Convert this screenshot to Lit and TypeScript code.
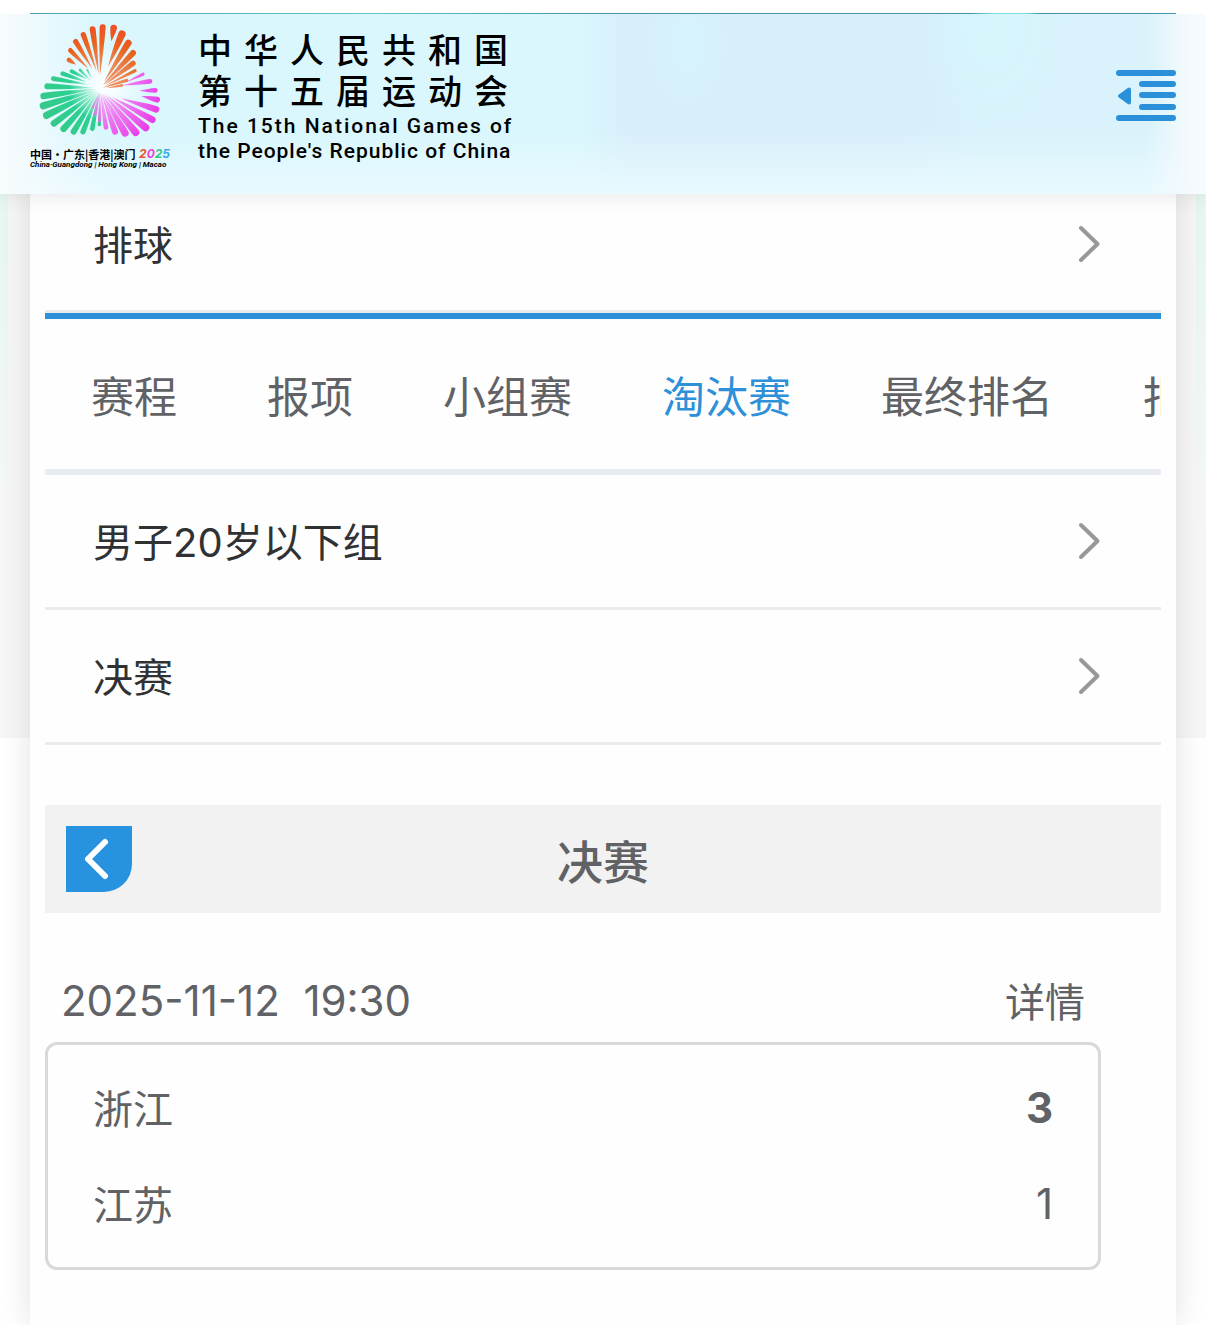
import { LitElement, html, svg, css } from "lit";
import { customElement, property, state } from "lit/decorators.js";

type Petal = [x1: number, y1: number, x2: number, y2: number, r: number];

/* Each petal tapers from (x1, y1) to a rounded tip centred on (x2, y2). */
const ORANGE: Petal[] = [
  [228, 190, 207, 176, 7],
  [266, 203, 211, 147, 7],
  [277, 202, 227, 121, 8],
  [290, 210, 250, 100, 8],
  [296, 218, 278, 84, 9],
  [300, 222, 308, 78, 9],
  [334, 120, 341, 80, 10],
  [324, 196, 366, 98, 11],
  [312, 242, 385, 125, 10],
  [308, 252, 399, 155, 9],
  [312, 251, 399, 186, 8],
  [314, 254, 405, 208, 5],
  [308, 259, 380, 237, 5],
  [320, 260, 366, 252, 4],
];
const GREEN: Petal[] = [
  [272, 238, 240, 206, 4],
  [276, 234, 262, 206, 3],
  [262, 234, 215, 210, 6],
  [262, 243, 188, 217, 7],
  [266, 250, 160, 232, 7],
  [280, 260, 142, 255, 9],
  [288, 263, 131, 284, 10],
  [290, 265, 130, 313, 11],
  [292, 267, 140, 342, 11],
  [293, 268, 162, 366, 10],
  [294, 269, 191, 382, 10],
  [295, 270, 221, 391, 9],
  [296, 271, 249, 391, 8],
  [297, 272, 277, 382, 7],
  [299, 310, 298, 370, 5],
];
const MAGENTA: Petal[] = [
  [378, 243, 429, 219, 5],
  [366, 252, 450, 240, 7],
  [418, 268, 466, 267, 7],
  [424, 284, 471, 295, 9],
  [362, 291, 468, 324, 10],
  [334, 286, 457, 355, 10],
  [318, 280, 437, 379, 11],
  [312, 278, 407, 393, 11],
  [308, 278, 375, 395, 11],
  [305, 276, 345, 391, 9],
  [302, 274, 318, 378, 7],
  [300, 272, 299, 358, 5],
  [299, 274, 286, 338, 5],
  [298, 276, 279, 318, 4],
];

const petalPath = ([x1, y1, x2, y2, r]: Petal) => {
  const dx = x2 - x1;
  const dy = y2 - y1;
  const length = Math.hypot(dx, dy);
  const nx = (-dy / length) * r;
  const ny = (dx / length) * r;
  const mx = x1 + dx * 0.6;
  const my = y1 + dy * 0.6;
  return `M${x1} ${y1}Q${mx + nx * 0.85} ${my + ny * 0.85} ${x2 + nx} ${y2 + ny}
    A${r} ${r} 0 0 0 ${x2 - nx} ${y2 - ny}Q${mx - nx * 0.85} ${my - ny * 0.85} ${x1} ${y1}Z`;
};

@customElement("games-logo")
class GamesLogo extends LitElement {
  static styles = css`
    :host {
      display: flex;
      align-items: flex-start;
      gap: 28px;
      color: #000;
    }
    .emblem {
      display: flex;
      flex-direction: column;
      width: 140px;
      white-space: nowrap;
    }
    .flower {
      width: 128px;
      height: 118px;
      margin-left: 6px;
    }
    .hosts {
      display: flex;
      justify-content: space-between;
      margin-top: 7px;
      font: 700 11px/14px "Noto Sans CJK SC", sans-serif;
    }
    .hosts b {
      font: italic 700 12px/14px Inter, sans-serif;
    }
    .y1 { color: #f0522b; }
    .y2 { color: #e945dd; }
    .y3 { color: #2fc98b; }
    .y4 { color: #38a8ee; }
    .cities {
      font: italic 700 8px/8px Roboto, sans-serif;
    }
    .name {
      display: flex;
      flex-direction: column;
      padding-top: 6px;
      white-space: nowrap;
    }
    .zh {
      font: 500 34px/41px "Noto Sans CJK SC", sans-serif;
      letter-spacing: 12px;
    }
    .english {
      margin-top: 4px;
      font: 500 21px/25px Roboto, sans-serif;
    }
    .en {
      display: block;
      letter-spacing: 2px;
    }
    .en.close {
      letter-spacing: 1px;
    }
  `;

  render() {
    return html`
      <div class="emblem">
        <svg class="flower" viewBox="108 62 384 354" aria-hidden="true">
          <defs>
            <radialGradient id="o" gradientUnits="userSpaceOnUse" cx="300" cy="255" r="190">
              <stop offset="0" stop-color="#e2602a" stop-opacity=".75" />
              <stop offset=".35" stop-color="#ea6a28" stop-opacity=".75" />
              <stop offset=".7" stop-color="#e9631f" />
              <stop offset="1" stop-color="#ee4d26" />
            </radialGradient>
            <radialGradient id="g" gradientUnits="userSpaceOnUse" cx="298" cy="264" r="180">
              <stop offset="0" stop-color="#7fe8c0" stop-opacity=".3" />
              <stop offset=".5" stop-color="#2bd191" />
              <stop offset="1" stop-color="#35c98a" />
            </radialGradient>
            <radialGradient id="m" gradientUnits="userSpaceOnUse" cx="300" cy="264" r="180">
              <stop offset="0" stop-color="#f08af0" stop-opacity=".5" />
              <stop offset=".5" stop-color="#f066ef" stop-opacity=".85" />
              <stop offset="1" stop-color="#e83fe6" />
            </radialGradient>
            <radialGradient id="w">
              <stop offset="0" stop-color="#fff" />
              <stop offset="1" stop-color="#fff" stop-opacity="0" />
            </radialGradient>
          </defs>
          <circle cx="320" cy="250" r="120" fill="url(#w)" />
          ${GREEN.map((p) => svg`<path d=${petalPath(p)} fill="url(#g)" />`)}
          ${MAGENTA.map((p) => svg`<path d=${petalPath(p)} fill="url(#m)" />`)}
          ${ORANGE.map((p) => svg`<path d=${petalPath(p)} fill="url(#o)" />`)}
        </svg>
        <div class="hosts"><span>中国·广东|香港|澳门</span><b><span class="y1">2</span><span class="y2">0</span><span class="y3">2</span><span class="y4">5</span></b></div>
        <div class="cities">China·Guangdong | Hong Kong | Macao</div>
      </div>
      <div class="name">
        <span class="zh">中华人民共和国</span>
        <span class="zh">第十五届运动会</span>
        <div class="english">
          <span class="en">The 15th National Games of</span>
          <span class="en close">the People's Republic of China</span>
        </div>
      </div>
    `;
  }
}

@customElement("picker-row")
class PickerRow extends LitElement {
  @property() label = "";

  static styles = css`
    :host {
      display: block;
      border-bottom: 3px solid #e9ecef;
    }
    .row {
      display: flex;
      align-items: center;
      justify-content: space-between;
      width: 100%;
      height: 132px;
      padding: 0 60px 0 48px;
      border: 0;
      background: none;
      color: #303133;
      font: 400 40px/60px Inter, "Noto Sans CJK SC", sans-serif;
      text-align: left;
      cursor: pointer;
    }
    .label {
      padding-top: 4px;
    }
    .chevron {
      width: 24px;
      height: 40px;
    }
  `;

  render() {
    return html`
      <button class="row" type="button">
        <span class="label">${this.label}</span>
        <svg class="chevron" viewBox="0 0 24 40" fill="none" stroke="#97989b" stroke-width="4"
          stroke-linecap="round" stroke-linejoin="round" aria-hidden="true">
          <path d="M4 4 20.500 20 4 36" />
        </svg>
      </button>
    `;
  }
}

@customElement("app-root")
class AppRoot extends LitElement {
  @state() private active = "淘汰赛";

  private tabs = ["赛程", "报项", "小组赛", "淘汰赛", "最终排名", "报"];
  private teams = [
    { name: "浙江", score: 3, won: true },
    { name: "江苏", score: 1, won: false },
  ];

  static styles = css`
    * {
      box-sizing: border-box;
    }
    :host {
      display: flex;
      flex-direction: column;
      min-height: 100vh;
      overflow: hidden;
      color: #606266;
      font-family: Inter, "Noto Sans CJK SC", sans-serif;
      background:
        linear-gradient(#e6f7f1, #e6f7f100) 0 194px / 8px 360px no-repeat,
        linear-gradient(#e6f7f1, #e6f7f100) 100% 194px / 10px 360px no-repeat,
        linear-gradient(#f7f7f7, #f7f7f7) 0 0 / 100% 738px no-repeat,
        #fff;
    }
    .top {
      position: relative;
      z-index: 1;
      padding-top: 13px;
      background: #fff;
      box-shadow: 0 4px 18px rgb(0 0 0 / 8%);
    }
    .rule {
      height: 1px;
      margin: 0 30px;
      background: linear-gradient(90deg, #4fa3b8, #62c3cc 30%, #4a93b4 50%, #4a93b4 82%, #7fdbe0 84%, #7fdbe0 87%, #4a93b4 88%);
    }
    .bar {
      display: flex;
      align-items: flex-start;
      justify-content: space-between;
      height: 180px;
      padding: 8px 30px 0;
      background:
        linear-gradient(90deg, #f8fbfd, #f8fbfd00 100px),
        linear-gradient(270deg, #f8fbfd, #f3fafd 20px, #f3fafd00 60px),
        linear-gradient(#e9faff00 65%, #e9faff),
        radial-gradient(50px 80px at 57% 30px, #d6f4fc, #d6f4fc00),
        radial-gradient(70px 100px at 82% 10px, #d4f6fc, #d4f6fc00),
        linear-gradient(90deg, #d9f7fd 48%, #d8eefa 52%, #d8eefa 75%, #d9f2fb 82%);
    }
    .menu {
      width: 60px;
      height: 52px;
      margin-top: 48px;
      padding: 0;
      border: 0;
      background: none;
      cursor: pointer;
    }
    .menu svg {
      display: block;
      width: 60px;
      height: 52px;
    }
    .card {
      flex: 1;
      margin: -16px 30px 0;
      padding: 0 15px 56px;
      background: #fefefe;
      box-shadow: 0 0 30px rgb(0 0 0 / 12%);
    }
    .tabs {
      display: flex;
      align-items: center;
      gap: 90px;
      height: 162px;
      padding: 0 0 0 46px;
      border-top: 6px solid #2e90d8;
      border-bottom: 6px solid #e9ecf2;
      overflow: hidden;
    }
    .tab {
      flex: none;
      padding: 0;
      border: 0;
      background: none;
      color: inherit;
      font: 400 43px/64px "Noto Sans CJK SC", sans-serif;
      cursor: pointer;
    }
    .tab.active {
      color: #2e90d8;
    }
    .stage {
      display: grid;
      grid-template-columns: 66px 1fr 66px;
      align-items: center;
      margin-top: 60px;
      padding: 21px;
      background: #f2f2f2;
    }
    .back {
      display: grid;
      place-items: center;
      width: 66px;
      height: 66px;
      padding: 0;
      border: 0;
      border-radius: 0 0 28px 0;
      background: #2692e0;
      cursor: pointer;
    }
    .back svg {
      width: 66px;
      height: 66px;
    }
    h1 {
      margin: 0;
      font: 500 46px/66px "Noto Sans CJK SC", sans-serif;
      text-align: center;
    }
    .match {
      margin: 47px 60px 0 0;
    }
    .meta {
      display: flex;
      align-items: center;
      justify-content: space-between;
      height: 82px;
      padding: 0 16px;
    }
    time {
      font-size: 42px;
      line-height: 60px;
      white-space: pre;
    }
    .detail {
      padding-top: 4px;
      color: inherit;
      font-size: 40px;
      line-height: 60px;
      text-decoration: none;
    }
    .result {
      padding: 15px 45px;
      border: 3px solid #d9d9d9;
      border-radius: 12px;
    }
    table {
      width: 100%;
      border-collapse: collapse;
    }
    th,
    td {
      height: 96px;
      padding: 4px 0 0;
      font-weight: 400;
      font-size: 40px;
      line-height: 60px;
      text-align: left;
    }
    td {
      padding: 0;
      font-size: 42px;
      text-align: right;
    }
    .won {
      font-weight: 700;
    }
  `;

  render() {
    return html`
      <header class="top">
        <div class="rule"></div>
        <div class="bar">
          <games-logo></games-logo>
          <button class="menu" type="button" aria-label="菜单">
            <svg viewBox="0 0 60 52" stroke="#2b90da" stroke-width="6" stroke-linecap="round" aria-hidden="true">
              <path d="M3 3H57M26 14H57M26 25H57M26 37H57M3 48H57" />
              <path d="M4 26 13 19.500V32.500Z" fill="#2b90da" stroke-width="4" stroke-linejoin="round" />
            </svg>
          </button>
        </div>
      </header>
      <main class="card">
        <picker-row label="排球"></picker-row>
        <nav class="tabs">
          ${this.tabs.map(
            (tab) => html`<button
              type="button"
              class="tab ${tab === this.active ? "active" : ""}"
              @click=${() => (this.active = tab)}
            >${tab}</button>`
          )}
        </nav>
        <picker-row label="男子20岁以下组"></picker-row>
        <picker-row label="决赛"></picker-row>
        <div class="stage">
          <button class="back" type="button" aria-label="返回">
            <svg viewBox="0 0 66 66" fill="none" stroke="#fff" stroke-width="6"
              stroke-linecap="round" stroke-linejoin="round" aria-hidden="true">
              <path d="M39 16 22 33 39 50" />
            </svg>
          </button>
          <h1>决赛</h1>
        </div>
        <section class="match">
          <div class="meta">
            <time datetime="2025-11-12T19:30">2025-11-12  19:30</time>
            <a class="detail" href="#detail">详情</a>
          </div>
          <div class="result">
            <table>
              <tbody>
                ${this.teams.map(
                  (team) => html`<tr>
                    <th scope="row">${team.name}</th>
                    <td class=${team.won ? "won" : ""}>${team.score}</td>
                  </tr>`
                )}
              </tbody>
            </table>
          </div>
        </section>
      </main>
    `;
  }
}
